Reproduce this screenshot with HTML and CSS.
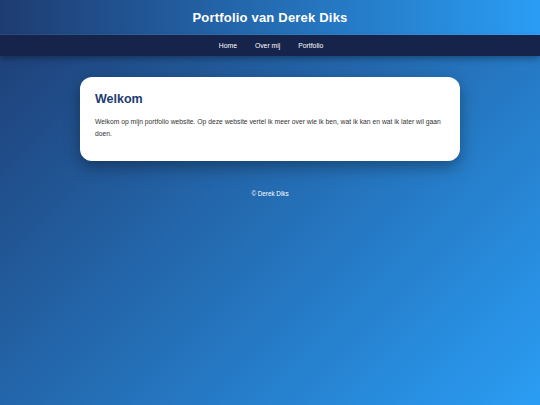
FILE: index.html
```html
<!DOCTYPE html>
<html lang="nl">
<head>
<meta charset="utf-8">
<title>Portfolio van Derek Diks</title>
<link rel="stylesheet" href="styles.css">
</head>
<body>
<header class="site-header">
  <h1 class="site-title">Portfolio van Derek Diks</h1>
</header>
<nav class="site-nav">
  <a href="#" class="nav-link">Home</a>
  <a href="#" class="nav-link">Over mij</a>
  <a href="#" class="nav-link">Portfolio</a>
</nav>
<main class="content">
  <section class="card">
    <h2 class="card-title">Welkom</h2>
    <p class="card-text">Welkom op mijn portfolio website. Op deze website vertel ik meer over wie ik ben, wat ik kan en wat ik later wil gaan doen.</p>
  </section>
</main>
<footer class="site-footer">© Derek Diks</footer>
</body>
</html>
```
FILE: styles.css
```css
* { box-sizing: border-box; }
html, body { height: 100%; }
body {
  margin: 0;
  font-family: "Liberation Sans", Arial, sans-serif;
  background: linear-gradient(135deg, #1e3c72 0%, #2a9df4 100%);
  background-attachment: fixed;
  min-height: 100vh;
  color: #333;
}
.site-header {
  height: 35px;
  display: flex;
  align-items: center;
  justify-content: center;
  background: linear-gradient(to right, #1e3c72, #2a9df4);
  border-bottom: 1px solid rgba(255,255,255,0.08);
}
.site-title {
  margin: 0;
  color: #fff;
  font-size: 13px;
  font-weight: bold;
  letter-spacing: 0.2px;
}
.site-nav {
  height: 21px;
  background: #16234a;
  display: flex;
  justify-content: center;
  align-items: center;
  gap: 18px;
  padding-left: 2px;
  box-shadow: 0 3px 6px rgba(0,0,0,0.3);
}
.nav-link {
  color: #fff;
  text-decoration: none;
  font-size: 6.8px;
}
.content {
  padding-top: 21px;
  display: flex;
  justify-content: center;
}
.card {
  width: 380px;
  background: #fff;
  border-radius: 12px;
  padding: 15px 15px 21px;
  box-shadow: 0 6px 16px rgba(0,0,0,0.35);
}
.card-title {
  margin: 0 0 10px;
  color: #1e3c72;
  font-size: 12.5px;
  font-weight: bold;
}
.card-text {
  margin: 0;
  font-size: 6.75px;
  line-height: 12px;
  color: #333;
}
.site-footer {
  text-align: center;
  color: #fff;
  font-size: 6.3px;
  margin-top: 29px;
}
```
